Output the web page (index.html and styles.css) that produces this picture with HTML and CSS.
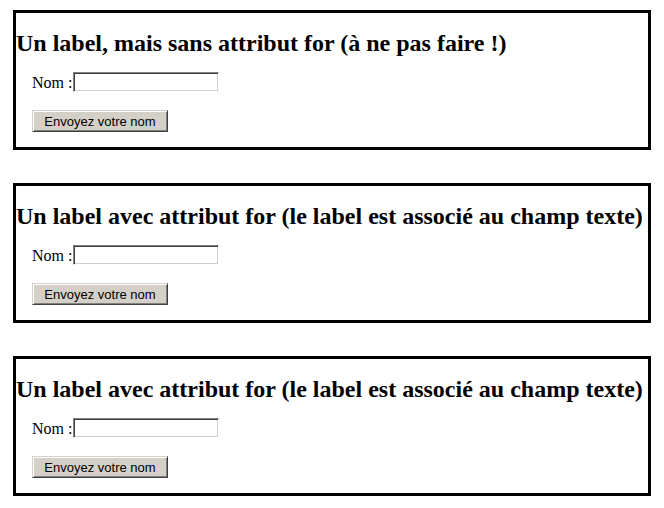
FILE: index.html
```html
<!DOCTYPE html>
<html lang="fr">
<head>
<meta charset="utf-8">
<title>Labels</title>
<link rel="stylesheet" href="styles.css">
</head>
<body>
<div class="page">
  <section class="box">
    <h2 class="box-title">Un label, mais sans attribut for (à ne pas faire !)</h2>
    <form class="form">
      <div class="row"><label class="label">Nom :</label><input class="field" type="text"></div>
      <button class="btn" type="button">Envoyez votre nom</button>
    </form>
  </section>
  <section class="box">
    <h2 class="box-title">Un label avec attribut for (le label est associé au champ texte)</h2>
    <form class="form">
      <div class="row"><label class="label" for="nom2">Nom :</label><input class="field" id="nom2" type="text"></div>
      <button class="btn" type="button">Envoyez votre nom</button>
    </form>
  </section>
  <section class="box">
    <h2 class="box-title">Un label avec attribut for (le label est associé au champ texte)</h2>
    <form class="form">
      <div class="row"><label class="label" for="nom3">Nom :</label><input class="field" id="nom3" type="text"></div>
      <button class="btn" type="button">Envoyez votre nom</button>
    </form>
  </section>
</div>
</body>
</html>
```

FILE: styles.css
```css
html, body {
  margin: 0;
  padding: 0;
  background: #fff;
}
body {
  font-family: "Liberation Serif", "Times New Roman", serif;
  color: #000;
}
.page {
  padding: 10px 13px 0;
  display: flex;
  flex-direction: column;
  gap: 33px;
}
.box {
  border: 3px solid #000;
}
.box-title {
  margin: 16px 0 0;
  font-size: 24px;
  line-height: 28px;
  font-weight: bold;
  white-space: nowrap;
}
.form {
  margin: 15px 0 0;
  padding: 0 16px 15px;
  display: flex;
  flex-direction: column;
  align-items: flex-start;
  gap: 18px;
}
.row {
  display: flex;
  align-items: flex-start;
  height: 20px;
}
.label {
  font-size: 16px;
  line-height: 20px;
  padding-top: 1px;
  padding-right: 1px;
}
.field {
  box-sizing: border-box;
  width: 146px;
  height: 20px;
  margin: 0;
  padding: 0 2px;
  background: #fff;
  border: 1px solid;
  border-color: #808080 #fff #fff #808080;
  box-shadow: inset 1px 1px 0 #404040, inset -1px -1px 0 #d4d0c8;
  font: 13px "Liberation Sans", Arial, sans-serif;
  outline: none;
}
.btn {
  box-sizing: border-box;
  width: 136px;
  height: 22px;
  margin: 0;
  padding: 0;
  background: #d4d0c8;
  border: 1px solid;
  border-color: #d4d0c8 #404040 #404040 #d4d0c8;
  box-shadow: inset 1px 1px 0 #fff, inset -1px -1px 0 #808080;
  font: 13px "Liberation Sans", Arial, sans-serif;
  color: #000;
  text-align: center;
}
```
